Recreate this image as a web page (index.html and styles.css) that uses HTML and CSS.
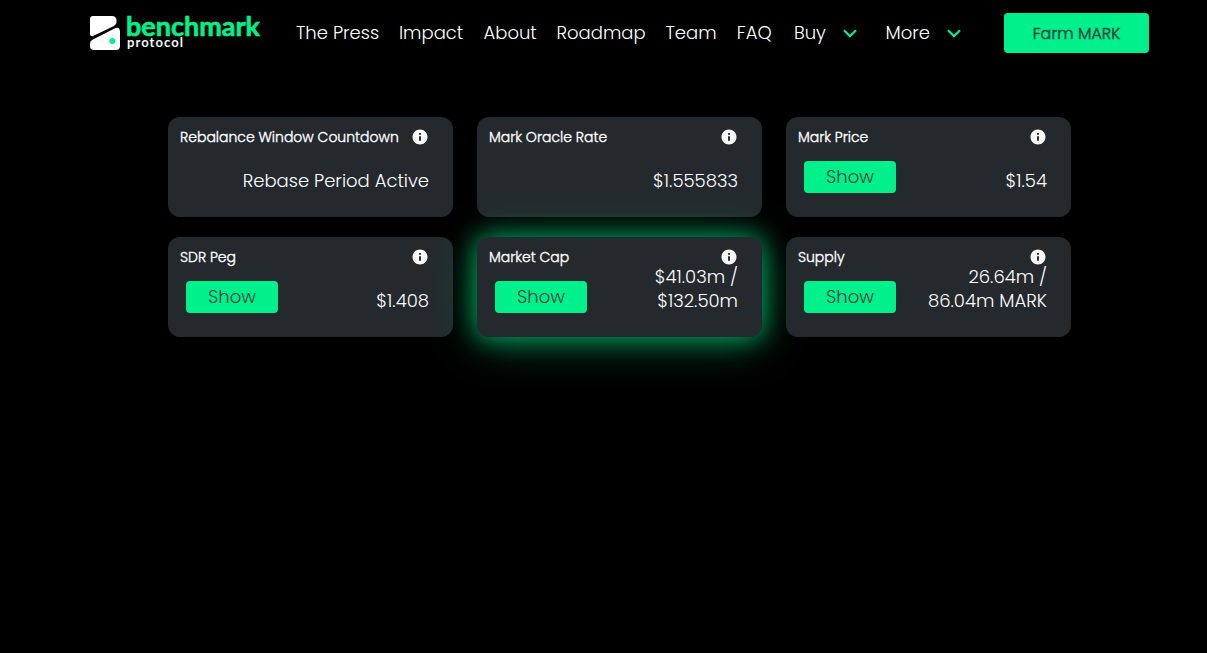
FILE: index.html
```
<!DOCTYPE html>
<html lang="en">
<head>
<meta charset="utf-8">
<title>Benchmark Protocol</title>
<link rel="stylesheet" href="styles.css">
</head>
<body>
<svg width="0" height="0" class="defs">
  <symbol id="info" viewBox="0 0 24 24"><path d="M12 2C6.480 2 2 6.480 2 12s4.480 10 10 10 10-4.480 10-10S17.520 2 12 2zm1.300 15h-2.600v-6h2.600v6zm0-8h-2.600V6.700h2.600V9z" fill="#f8f8f8"/></symbol>
  <symbol id="chevron" viewBox="0 0 14 9"><path d="M1 1.200 7 7.200 13 1.200" fill="none" stroke="#00f08c" stroke-width="2.300"/></symbol>
</svg>
<header class="header">
  <a class="logo">
    <svg class="logo-svg" width="180" height="38" viewBox="0 0 180 38">
      <path d="M3 1H22Q26 1 26.500 5V7Q26.500 9.500 24 11L3 21Q0 22 0 18V4Q0 1 3 1Z" fill="#fff"/>
      <path d="M2 25 24.500 13.500Q30 11 30 17V31Q30 35 26 35H4Q0 35 0 31V29Q0 26 2 25Z" fill="#fff"/>
      <circle cx="22.300" cy="26" r="3" fill="#00f08c"/>
      <text class="brand" x="36" y="20.500" textLength="134" lengthAdjust="spacingAndGlyphs">benchmark</text>
      <text class="brand-sub" x="37" y="32" textLength="56">protocol</text>
    </svg>
  </a>
  <nav class="nav">
    <a class="press">The Press</a><a class="impact">Impact</a><a class="about">About</a><a class="roadmap">Roadmap</a><a class="team">Team</a><a class="faq">FAQ</a>
    <a class="drop buy">Buy<svg class="chev"><use href="#chevron"/></svg></a>
    <a class="drop more">More<svg class="chev"><use href="#chevron"/></svg></a>
  </nav>
  <button class="farm">Farm MARK</button>
</header>
<main class="grid">
  <section class="card"><h2>Rebalance Window Countdown</h2><svg class="info"><use href="#info"/></svg><p class="phrase">Rebase Period Active</p></section>
  <section class="card"><h2>Mark Oracle Rate</h2><svg class="info"><use href="#info"/></svg><p>$1.555833</p></section>
  <section class="card"><h2>Mark Price</h2><svg class="info"><use href="#info"/></svg><button class="show">Show</button><p>$1.54</p></section>
  <section class="card"><h2>SDR Peg</h2><svg class="info"><use href="#info"/></svg><button class="show">Show</button><p>$1.408</p></section>
  <section class="card glow"><h2>Market Cap</h2><svg class="info"><use href="#info"/></svg><button class="show">Show</button><p>$41.03m /<br>$132.50m</p></section>
  <section class="card"><h2>Supply</h2><svg class="info"><use href="#info"/></svg><button class="show">Show</button><p>26.64m /<br>86.04m MARK</p></section>
</main>
</body>
</html>
```
FILE: styles.css
```
* { box-sizing: border-box; }
body {
  margin: 0;
  height: 653px;
  overflow: hidden;
  background: #000;
  color: #fff;
  font-family: Poppins, Inter, "Open Sans", sans-serif;
  font-weight: 300;
  font-size: 18px;
}
.defs { display: none; }
.header {
  display: flex;
  align-items: flex-start;
  height: 117px;
  padding: 13px 58px 0 90px;
}
.logo { width: 206px; padding-top: 2px; }
.logo-svg { display: block; overflow: visible; }
.brand { font: 700 26px Lato, sans-serif; fill: #00f08c; stroke: #00f08c; stroke-width: .6px; }
.brand-sub { font: 700 13px Lato, sans-serif; fill: #f4f4f4; }
.nav { display: flex; gap: 20px; height: 38px; align-items: center; white-space: nowrap; }
.nav a { display: block; }
.press { width: 83px; }
.impact { width: 64.500px; }
.about { width: 53px; }
.roadmap { width: 89px; }
.team { width: 51.300px; }
.faq { width: 35.200px; }
.nav .drop { display: flex; justify-content: space-between; align-items: center; }
.buy { width: 63px; margin-left: 2px; }
.more { width: 75.500px; margin-left: 8.500px; }
.chev { width: 14px; height: 9px; margin-top: 2px; }
button { border: 0; border-radius: 4px; background: #00f08c; font: inherit; color: #24403b; padding: 0; }
.farm { width: 145px; height: 40px; margin-left: auto; font-size: 16px; color: #2e4641; -webkit-text-stroke: .5px #2e4641; }
.grid {
  display: grid;
  grid-template-columns: repeat(3, 285px);
  grid-auto-rows: 100px;
  gap: 20px 24px;
  padding-left: 168px;
}
.card {
  display: grid;
  grid-template-columns: 110px 1fr 18px;
  grid-template-rows: 17px 1fr;
  padding: 11px 24px 24px 12px;
  border-radius: 12px;
  background: #24292d;
}
.card h2 { grid-column: 1 / 3; grid-row: 1; margin: 0; font-size: 14px; line-height: 18px; font-weight: 300; white-space: nowrap; -webkit-text-stroke: .35px #fff; }
.info { grid-column: 3; grid-row: 1; width: 18px; height: 18px; }
.show { grid-column: 1; grid-row: 2; align-self: end; width: 92px; height: 32px; margin-left: 6px; padding-bottom: 2px; }
.card p { grid-column: 2 / 4; grid-row: 2; align-self: end; margin: 0; line-height: 24px; text-align: right; white-space: nowrap; }
.card .phrase { grid-column: 1 / 4; }
.glow { box-shadow: 0 0 24px rgba(0, 240, 140, .6), 0 5px 44px rgba(0, 240, 140, .4); }
```
